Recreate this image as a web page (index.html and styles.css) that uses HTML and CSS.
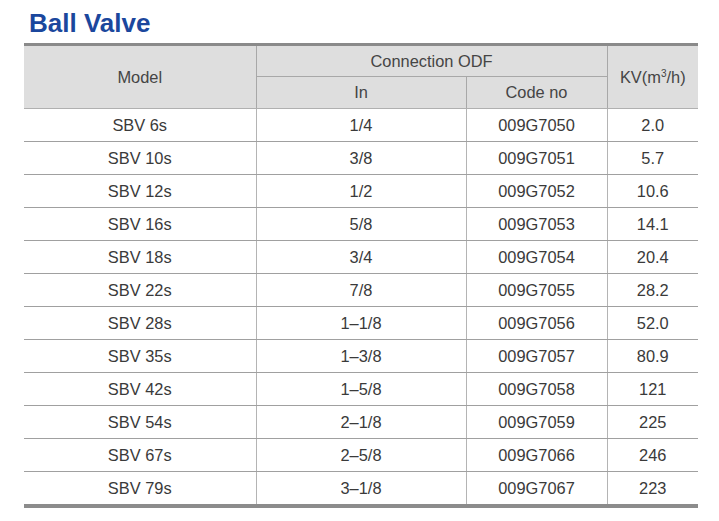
FILE: index.html
```html
<!DOCTYPE html>
<html>
<head>
<meta charset="utf-8">
<link rel="stylesheet" href="styles.css">
</head>
<body>
<div class="title">Ball Valve</div>
<table class="spec">
  <colgroup>
    <col class="c1"><col class="c2"><col class="c3"><col class="c4">
  </colgroup>
  <thead>
    <tr class="h1">
      <th rowspan="2" class="lv">Model</th>
      <th colspan="2" class="lv hb">Connection ODF</th>
      <th rowspan="2">KV(m<sup>3</sup>/h)</th>
    </tr>
    <tr class="h2">
      <th class="lv">In</th>
      <th class="lv">Code no</th>
    </tr>
  </thead>
  <tbody>
    <tr><td>SBV 6s</td><td>1/4</td><td>009G7050</td><td>2.0</td></tr>
    <tr><td>SBV 10s</td><td>3/8</td><td>009G7051</td><td>5.7</td></tr>
    <tr><td>SBV 12s</td><td>1/2</td><td>009G7052</td><td>10.6</td></tr>
    <tr><td>SBV 16s</td><td>5/8</td><td>009G7053</td><td>14.1</td></tr>
    <tr><td>SBV 18s</td><td>3/4</td><td>009G7054</td><td>20.4</td></tr>
    <tr><td>SBV 22s</td><td>7/8</td><td>009G7055</td><td>28.2</td></tr>
    <tr><td>SBV 28s</td><td>1&#8211;1/8</td><td>009G7056</td><td>52.0</td></tr>
    <tr><td>SBV 35s</td><td>1&#8211;3/8</td><td>009G7057</td><td>80.9</td></tr>
    <tr><td>SBV 42s</td><td>1&#8211;5/8</td><td>009G7058</td><td>121</td></tr>
    <tr><td>SBV 54s</td><td>2&#8211;1/8</td><td>009G7059</td><td>225</td></tr>
    <tr><td>SBV 67s</td><td>2&#8211;5/8</td><td>009G7066</td><td>246</td></tr>
    <tr><td>SBV 79s</td><td>3&#8211;1/8</td><td>009G7067</td><td>223</td></tr>
  </tbody>
</table>
</body>
</html>
```
FILE: styles.css
```css
html, body {
  margin: 0;
  padding: 0;
  background: #ffffff;
}
body {
  font-family: "Liberation Sans", Arial, sans-serif;
}
.title {
  font-size: 26px;
  line-height: 30px;
  font-weight: bold;
  color: #1b479d;
  padding: 8px 0 0 29px;
  margin-bottom: 5px;
}
.spec {
  margin-left: 24px;
  width: 674px;
  border-collapse: collapse;
  table-layout: fixed;
  border-top: 3px solid #8a8a8a;
  border-bottom: 4px solid #8c8c8c;
  color: #3a3a3a;
  font-size: 16.4px;
}
.c1 { width: 232px; }
.c2 { width: 210px; }
.c3 { width: 141px; }
.c4 { width: 91px; }
.spec th {
  background: #dedede;
  font-weight: normal;
  color: #454545;
  text-align: center;
  padding: 0;
  border-bottom: 1px solid #b0b0b0;
}
.spec .h1 { height: 32px; }
.spec .h2 { height: 32px; }
.spec th.lv { border-right: 1px solid #a8a8a8; }
.spec th.hb { border-bottom: 1px solid #a8a8a8; }
.spec sup {
  font-size: 10px;
  line-height: 0;
  vertical-align: 6px;
}
.spec td {
  height: 32px;
  padding: 0;
  text-align: center;
  border-bottom: 1px solid #a0a0a0;
  border-right: 1px solid #b4b4b4;
}
.spec td:last-child { border-right: none; }
.spec tbody tr:last-child td { border-bottom: none; }
```
